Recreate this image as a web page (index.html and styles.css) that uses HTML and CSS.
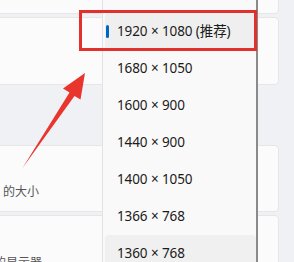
FILE: index.html
```html
<!DOCTYPE html>
<html lang="zh-CN">
<head>
  <meta charset="UTF-8" />
  <meta name="viewport" content="width=device-width, initial-scale=1.0"/>
  <title>显示器分辨率</title>
  <link rel="stylesheet" href="styles.css">
</head>
<body>
  <div class="page">
    <div class="cards">
      <div class="card card-top"></div>
      <div class="card card-res"></div>
      <div class="card card-scale"><span class="sub">的大小</span></div>
      <div class="card card-multi"><span class="sub cut">的显示器</span></div>
    </div>

    <div class="dropdown">
      <div class="option selected">1920 × 1080 (推荐)</div>
      <div class="option">1680 × 1050</div>
      <div class="option">1600 × 900</div>
      <div class="option">1440 × 900</div>
      <div class="option">1400 × 1050</div>
      <div class="option">1366 × 768</div>
      <div class="option hover">1360 × 768</div>
    </div>

    <div class="mark"></div>

    <svg class="arrow" width="294" height="262" viewBox="0 0 294 262">
      <polygon points="85,73 63,88.5 69.5,92.5 22.5,168 74.5,96 80.5,99.5" fill="#e8362f"/>
    </svg>
  </div>
</body>
</html>
```

FILE: styles.css
```css
body {
  margin: 0;
  background: #eff1f4;
  font-family: "Noto Sans", "Noto Sans CJK SC", sans-serif;
  overflow: hidden;
}

.page {
  position: relative;
  width: 294px;
  height: 262px;
  overflow: hidden;
}

.cards {
  display: flex;
  flex-direction: column;
  gap: 3px;
  width: 289px;
  margin-left: -10px;
  margin-top: -10px;
}

.card {
  box-sizing: border-box;
  background: #fbfbfb;
  border: 1px solid #e6e6e6;
  border-radius: 4px;
}

.card-top {
  height: 24px;
}

.card-res {
  height: 68px;
}

.card-scale {
  height: 67px;
  margin-top: 57px;
  padding-top: 38px;
}

.card-multi {
  height: 80px;
  padding-top: 39px;
}

.sub {
  display: block;
  padding-left: 12px;
  font-size: 12px;
  line-height: 16px;
  color: #555;
}

.sub.cut {
  margin-left: -9px;
}

.dropdown {
  position: absolute;
  left: 102px;
  top: 0;
  width: 153px;
  height: 262px;
  padding-top: 13px;
  background: #f9f9f9;
  border-left: 1px solid #e2e2e2;
  border-right: 2px solid #8a8a8a;
}

.option {
  position: relative;
  height: 37px;
  line-height: 37px;
  margin: 0 2px;
  padding-left: 12px;
  border-radius: 4px;
  font-size: 13.5px;
  letter-spacing: -0.1px;
  color: #1b1b1b;
  white-space: nowrap;
}

.option.selected {
  background: #efefef;
}

.option.selected::before {
  content: "";
  position: absolute;
  left: 1px;
  top: 12px;
  width: 3px;
  height: 13px;
  border-radius: 2px;
  background: #0067c0;
}

.option.hover {
  background: #f0f0f0;
  margin-right: 0;
}

.mark {
  position: absolute;
  left: 79px;
  top: 10px;
  width: 178px;
  height: 41px;
  box-sizing: border-box;
  border: 3px solid #e2302c;
}

.arrow {
  position: absolute;
  left: 0;
  top: 0;
}
```
